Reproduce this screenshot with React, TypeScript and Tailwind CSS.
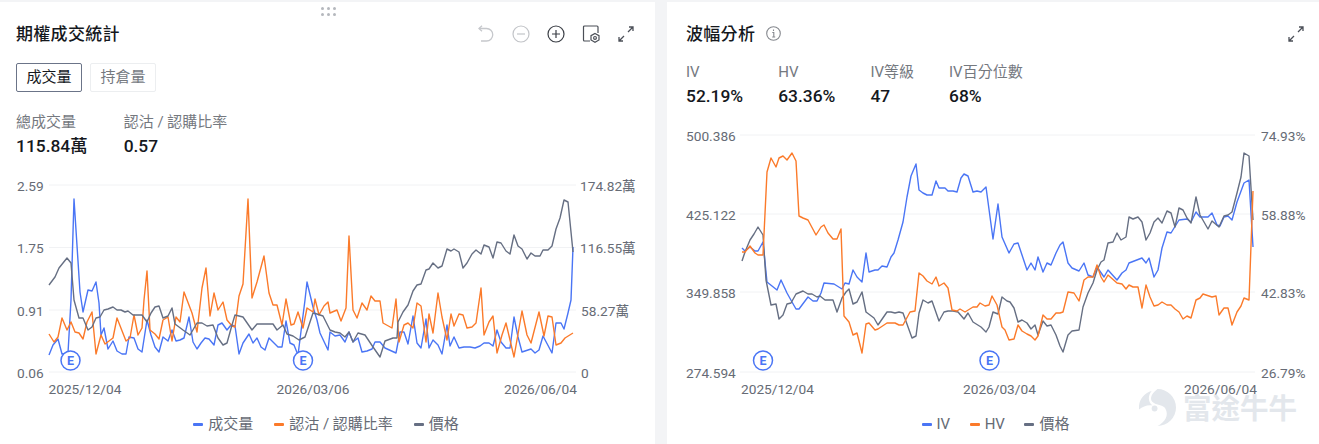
const BLUE = "#4a75f5";
const ORANGE = "#fb7a2a";
const GRAY = "#666f83";

const L_GRAY = "49,285 55,277 59,268 63,263 67,258 71,263 74,300 79,318 83,318 88,330 92,327 96,318 100,317 104,310 108,309 113,307 117,310 121,310 125,312 128,311 133,315 142,315 147,322 151,313 155,307 159,306 163,318 168,316 172,308 175,324 183,330 190,335 197,323 202,323 207,326 213,325 218,338 223,345 227,343 232,325 235,315 243,317 252,330 257,324 273,324 277,330 283,325 287,334 293,336 299,340 305,337 313,313 317,314 323,316 330,330 335,332 340,333 345,337 349,332 353,342 358,333 365,335 373,347 380,357 385,341 393,338 397,338 398,322 403,312 408,305 413,291 417,285 421,284 426,270 429,269 433,263 438,268 442,266 447,249 451,251 454,249 459,252 463,268 467,263 472,254 476,250 481,254 484,245 489,247 493,258 497,242 501,243 506,251 510,254 514,235 518,246 522,249 527,259 531,253 535,256 540,256 543,250 548,250 552,246 556,229 560,218 564,200 568,202 573,252";
const L_BLUE = "49,355 53,345 58,339 62,354 68,353 71,300 74,199 80,292 83,312 88,290 92,291 96,282 99,303 101,335 104,328 108,349 113,341 117,351 122,354 126,354 129,337 134,338 138,349 142,352 147,320 151,335 155,347 159,352 163,337 168,341 172,330 176,341 180,340 184,338 189,317 193,342 197,349 201,343 205,338 209,339 214,345 218,325 222,323 227,330 231,325 235,326 239,354 243,343 249,334 253,343 257,338 261,347 265,350 269,338 273,342 278,347 282,347 286,321 290,343 294,345 298,355 305,300 307,282 313,307 317,320 320,333 328,350 330,332 335,336 340,335 345,342 349,332 353,342 358,338 362,352 367,351 372,349 375,342 380,342 385,348 396,353 400,332 404,332 408,344 413,316 417,343 421,348 426,319 429,348 433,340 438,345 442,354 447,325 450,346 454,337 459,348 464,347 470,347 475,348 480,346 484,343 489,343 493,346 497,330 501,342 506,348 510,348 514,317 518,337 522,352 531,349 535,353 539,350 543,336 552,353 556,323 561,323 564,329 568,313 571,300 573,247";
const L_ORANGE = "49,334 54,342 58,337 62,318 67,330 71,322 75,332 79,333 83,339 87,322 92,312 96,354 101,335 105,344 113,338 117,318 126,341 130,338 134,315 138,335 142,328 144,300 147,271 150,330 155,334 159,339 163,320 168,317 172,341 176,317 180,322 184,292 192,313 197,332 202,288 206,268 210,316 214,293 218,310 223,302 227,320 232,326 235,327 239,296 243,284 248,199 252,298 257,282 264,256 269,293 273,305 277,305 282,325 286,299 291,325 294,324 298,312 303,328 307,308 313,312 315,299 319,315 324,306 328,302 330,313 337,310 341,321 346,308 349,236 353,310 357,318 362,303 367,310 371,296 375,301 380,301 383,323 392,328 396,299 399,342 404,325 408,323 413,328 417,303 421,306 426,342 429,314 433,333 438,293 442,317 447,340 451,314 454,326 459,314 463,315 467,328 472,327 476,323 481,288 484,335 489,322 493,316 497,353 502,335 506,323 514,357 522,311 527,335 531,343 539,312 544,336 548,316 552,317 556,345 561,343 565,338 573,333";

const R_BLUE = "742,248 745,251 750,247 755,251 758,251 763,242 767,282 777,290 781,280 787,293 792,302 796,309 799,309 808,297 813,301 817,301 821,293 824,283 834,284 842,289 845,283 849,284 853,270 857,277 862,282 866,253 869,272 875,270 878,270 882,266 887,267 891,257 894,253 898,240 903,222 907,197 911,176 916,164 919,190 923,193 927,195 932,195 936,181 939,188 945,188 948,191 953,191 957,192 961,178 964,174 968,176 973,192 977,191 981,192 986,187 993,239 998,204 1002,237 1009,253 1014,244 1018,243 1027,270 1031,263 1035,270 1038,257 1043,272 1047,263 1051,265 1056,253 1060,245 1063,242 1068,263 1072,268 1079,271 1084,263 1088,275 1093,277 1097,267 1104,277 1108,270 1117,280 1122,273 1126,270 1129,263 1142,258 1146,263 1149,258 1154,277 1158,270 1162,248 1167,232 1171,233 1179,220 1187,219 1191,222 1196,212 1200,217 1208,217 1212,213 1217,225 1220,226 1224,217 1228,216 1232,220 1237,202 1244,183 1249,180 1253,247";
const R_ORANGE = "742,252 745,252 750,246 755,253 758,255 763,255 767,172 771,158 776,167 779,158 783,156 787,160 792,153 796,161 799,216 803,218 808,220 816,235 821,227 824,225 828,233 833,239 837,239 841,229 844,316 849,322 853,335 857,333 862,353 866,324 869,323 875,330 878,329 887,323 895,323 899,325 903,325 910,312 915,311 919,273 923,276 927,281 932,284 936,277 939,286 944,283 948,288 952,310 957,311 960,309 965,312 973,307 977,307 980,303 985,306 989,305 992,296 997,305 1002,327 1005,330 1009,340 1014,339 1018,325 1022,331 1027,334 1031,336 1035,340 1038,336 1043,315 1047,319 1051,319 1056,313 1060,313 1063,312 1068,292 1074,293 1079,301 1084,280 1088,277 1093,277 1097,265 1101,277 1104,282 1108,275 1117,283 1122,284 1126,289 1129,285 1133,287 1138,287 1142,308 1146,285 1150,297 1154,306 1158,305 1162,302 1167,305 1171,305 1175,309 1179,312 1183,319 1187,316 1191,318 1196,300 1200,298 1203,294 1212,297 1216,296 1219,315 1224,308 1228,308 1232,325 1237,312 1241,306 1244,298 1249,300 1253,191";
const R_GRAY = "742,261 745,252 750,240 754,234 758,227 763,235 766,280 771,305 776,304 779,319 783,315 787,304 791,303 796,294 803,291 808,294 812,294 817,297 820,296 825,300 833,300 837,312 842,298 846,292 849,289 853,304 857,302 862,292 866,312 870,315 874,318 878,325 887,312 891,312 895,313 899,312 903,313 912,338 916,336 919,313 923,300 928,303 932,301 939,321 944,312 948,311 953,311 958,312 964,319 968,313 973,322 981,327 986,332 989,327 993,312 998,314 1002,297 1007,301 1010,302 1014,308 1018,322 1022,320 1027,323 1031,329 1035,325 1038,335 1043,321 1047,326 1051,325 1056,335 1060,346 1063,352 1068,335 1072,331 1079,330 1083,307 1088,293 1093,283 1097,270 1101,262 1104,260 1108,243 1113,242 1117,233 1121,240 1126,237 1129,217 1133,219 1138,217 1142,222 1146,240 1150,233 1154,222 1158,218 1162,223 1167,211 1171,213 1175,227 1179,208 1183,210 1187,218 1191,223 1196,197 1200,215 1208,229 1212,221 1219,227 1224,216 1228,215 1232,212 1237,193 1241,177 1244,153 1249,156 1253,220";

function Line({ points, color }: { points: string; color: string }) {
  return <polyline points={points} fill="none" stroke={color} strokeWidth={1.4} strokeLinejoin="round" />;
}

function Badge({ x, y }: { x: number; y: number }) {
  return (
    <g>
      <circle cx={x} cy={y} r={9.5} fill="#fff" stroke={BLUE} strokeWidth={1.5} />
      <text x={x} y={y + 4.5} textAnchor="middle" fontSize={12.5} fontWeight={700} fill={BLUE}>E</text>
    </g>
  );
}

function Axis({ children, x, y, anchor }: { children: string; x: number; y: number; anchor?: "start" | "end" }) {
  return (
    <text x={x} y={y} textAnchor={anchor ?? "start"} fontSize={13.7} fill="#666b75">{children}</text>
  );
}

function Stat({ label, value }: { label: string; value: string }) {
  return (
    <div className="flex flex-col">
      <span className="text-[15px] leading-[20px] text-[#75797f] whitespace-nowrap">{label}</span>
      <span className="mt-[2px] text-[17.4px] leading-[24px] font-medium text-[#15181d] whitespace-nowrap">{value}</span>
    </div>
  );
}

function LegendItem({ color, label }: { color: string; label: string }) {
  return (
    <div className="flex items-center gap-[5px]">
      <span className="w-[10px] h-[3px] rounded-[1px]" style={{ backgroundColor: color }} />
      <span className="text-[15px] leading-[20px] text-[#666b75] whitespace-nowrap">{label}</span>
    </div>
  );
}

function ExpandIcon() {
  return (
    <svg width="18" height="18" viewBox="0 0 18 18" fill="none" stroke="#4b4f57" strokeWidth="1.3">
      <path d="M11 7 16 2M12 2H16V6" />
      <path d="M7 11 2 16M2 12V16H6" />
    </svg>
  );
}

function Toolbar() {
  return (
    <div className="flex items-center gap-[17px]">
      <svg width="18" height="18" viewBox="0 0 18 18" fill="none" stroke="#c6c8cc" strokeWidth="1.3">
        <path d="M2 3.5H9.5a6 6 0 0 1 0 12.5H4" />
        <path d="M5 .8 2 3.5 5 6.2" />
      </svg>
      <svg width="18" height="18" viewBox="0 0 18 18" fill="none" stroke="#c2c4c8" strokeWidth="1.2">
        <circle cx="9" cy="9" r="8" />
        <path d="M5 9H13" />
      </svg>
      <svg width="18" height="18" viewBox="0 0 18 18" fill="none" stroke="#3b3f46" strokeWidth="1.2">
        <circle cx="9" cy="9" r="8" />
        <path d="M5 9H13M9 5V13" />
      </svg>
      <svg width="18" height="18" viewBox="0 0 18 18" fill="none" stroke="#4b4f57" strokeWidth="1.2">
        <path d="M8 16H2.5a1 1 0 0 1-1-1V2a1 1 0 0 1 1-1H15a1 1 0 0 1 1 1V8" />
        <path d="M13 8.5 17 10.7V15L13 17.3 9 15V10.7Z" fill="#fff" />
        <circle cx="13" cy="12.9" r="1.4" />
      </svg>
      <ExpandIcon />
    </div>
  );
}

export default function App() {
  return (
    <div className="relative flex w-full h-[444px] overflow-hidden gap-[12px] pt-[2px] bg-[#f3f4f6] font-[Roboto,'Noto_Sans_CJK_TC',sans-serif]">
      <section className="relative flex flex-col w-[655px] bg-white">
        <div className="absolute left-[321px] top-[5px] grid grid-cols-3 gap-x-[3px] gap-y-[3px]">
          {[0, 1, 2, 3, 4, 5].map((i) => (
            <span key={i} className="w-[3px] h-[3px] rounded-full bg-[#b5b8bd]" />
          ))}
        </div>
        <div className="flex items-center justify-between pl-[16px] pr-[20px] pt-[11px] h-[52px]">
          <h2 className="text-[17px] leading-[24px] font-medium text-[#15181d] tracking-[0.3px]">期權成交統計</h2>
          <Toolbar />
        </div>
        <div className="flex gap-[8px] pl-[16px] pt-[9px]">
          <button className="w-[66px] h-[29px] rounded-[2px] border border-[#6b7488] text-[15px] text-[#15181d]">成交量</button>
          <button className="w-[66px] h-[29px] rounded-[2px] border border-[#eceef0] text-[15px] text-[#75797f]">持倉量</button>
        </div>
        <div className="flex gap-[36px] pl-[16px] pt-[20px]">
          <Stat label="總成交量" value="115.84萬" />
          <Stat label="認沽 / 認購比率" value="0.57" />
        </div>
        <svg className="block mt-[10px] w-[655px] h-[232px]" viewBox="0 168 655 232">
          {[185, 247.5, 310, 372].map((y) => (
            <line key={y} x1={49} x2={576} y1={y} y2={y} stroke="#f1f2f4" strokeWidth={1} />
          ))}
          <Line points={L_BLUE} color={BLUE} />
          <Line points={L_ORANGE} color={ORANGE} />
          <Line points={L_GRAY} color={GRAY} />
          <Badge x={70.5} y={360.5} />
          <Badge x={303} y={360.5} />
          <Axis x={17} y={191}>2.59</Axis>
          <Axis x={17} y={253}>1.75</Axis>
          <Axis x={17} y={316}>0.91</Axis>
          <Axis x={17} y={378}>0.06</Axis>
          <Axis x={580} y={191}>174.82萬</Axis>
          <Axis x={580} y={253}>116.55萬</Axis>
          <Axis x={581} y={316}>58.27萬</Axis>
          <Axis x={581} y={378}>0</Axis>
          <Axis x={48.5} y={394}>2025/12/04</Axis>
          <Axis x={276.5} y={394}>2026/03/06</Axis>
          <Axis x={504} y={394}>2026/06/04</Axis>
        </svg>
        <div className="flex justify-center gap-[21px] pt-[14px] pr-[3px]">
          <LegendItem color={BLUE} label="成交量" />
          <LegendItem color={ORANGE} label="認沽 / 認購比率" />
          <LegendItem color={GRAY} label="價格" />
        </div>
      </section>

      <section className="relative flex flex-col flex-1 bg-white">
        <div className="flex items-center justify-between pl-[19px] pr-[14px] pt-[11px] h-[52px]">
          <div className="flex items-center gap-[11px]">
            <h2 className="text-[17px] leading-[24px] font-medium text-[#15181d] tracking-[0.3px]">波幅分析</h2>
            <svg width="15" height="15" viewBox="0 0 15 15" fill="none" stroke="#85888e" strokeWidth="1.1">
              <circle cx="7.5" cy="7.5" r="6.8" />
              <path d="M6.3 6.5H7.8V11M6.2 11H9.2M7.5 3.6V5" />
            </svg>
          </div>
          <ExpandIcon />
        </div>
        <div className="flex gap-[35px] pl-[19px] pt-[8px]">
          <Stat label="IV" value="52.19%" />
          <Stat label="HV" value="63.36%" />
          <Stat label="IV等級" value="47" />
          <Stat label="IV百分位數" value="68%" />
        </div>
        <svg className="block mt-[11px] w-[652px] h-[283px]" viewBox="667 119 652 283">
          {[135, 214, 292, 372].map((y) => (
            <line key={y} x1={740} x2={1255} y1={y} y2={y} stroke="#f1f2f4" strokeWidth={1} />
          ))}
          <Line points={R_BLUE} color={BLUE} />
          <Line points={R_GRAY} color={GRAY} />
          <Line points={R_ORANGE} color={ORANGE} />
          <Badge x={763} y={360.5} />
          <Badge x={989.5} y={360.5} />
          <Axis x={686} y={141}>500.386</Axis>
          <Axis x={686} y={219.5}>425.122</Axis>
          <Axis x={686} y={298}>349.858</Axis>
          <Axis x={686} y={378}>274.594</Axis>
          <Axis x={1261} y={141}>74.93%</Axis>
          <Axis x={1261} y={219.5}>58.88%</Axis>
          <Axis x={1261} y={298}>42.83%</Axis>
          <Axis x={1261} y={378}>26.79%</Axis>
          <Axis x={741} y={394}>2025/12/04</Axis>
          <Axis x={963} y={394}>2026/03/04</Axis>
          <Axis x={1184} y={394}>2026/06/04</Axis>
        </svg>
        <div className="flex justify-center gap-[19.5px] pt-[12px] pl-[5px]">
          <LegendItem color={BLUE} label="IV" />
          <LegendItem color={ORANGE} label="HV" />
          <LegendItem color={GRAY} label="價格" />
        </div>
      </section>

      <div className="absolute left-[1139px] top-[389px] flex items-start gap-[7px] pointer-events-none">
        <svg width="37" height="37" viewBox="0 0 38 38">
          <path fill="#e3e7ec" d="M19 0A19 19 0 1 1 19 38C27 34 31 27 27 20 25 16 19 17 15 14 11 12 11 6 19 0Z" />
          <path fill="#e3e7ec" d="M13 2C9 7 9 13 14 17 9 16 4 18 0 21-1 12 5 4 13 2Z" />
          <circle cx="16" cy="20" r="3" fill="#e3e7ec" />
        </svg>
        <span className="pt-[9px] text-[28.5px] leading-[24px] font-bold text-[#e3e7ec] whitespace-nowrap">富途牛牛</span>
      </div>
    </div>
  );
}
